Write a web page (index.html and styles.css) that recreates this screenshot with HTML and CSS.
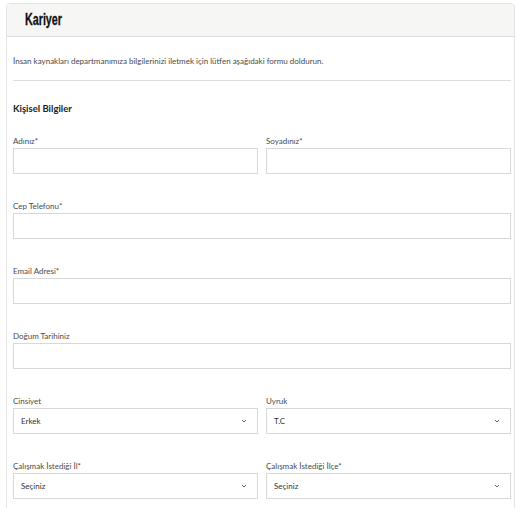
FILE: index.html
```html
<!DOCTYPE html>
<html lang="tr">
<head>
<meta charset="utf-8">
<link rel="stylesheet" href="styles.css">
</head>
<body>
<div class="page">
  <div class="card">
    <div class="card-header"><h1 class="title">Kariyer</h1></div>
    <div class="card-body">
      <p class="intro">İnsan kaynakları departmanımıza bilgilerinizi iletmek için lütfen aşağıdaki formu doldurun.</p>
      <div class="divider"></div>
      <h2 class="section">Kişisel Bilgiler</h2>
      <div class="grid">
        <div class="field"><label class="label">Adınız*</label><div class="input"></div></div>
        <div class="field"><label class="label">Soyadınız*</label><div class="input"></div></div>
        <div class="field full"><label class="label">Cep Telefonu*</label><div class="input"></div></div>
        <div class="field full"><label class="label">Email Adresi*</label><div class="input"></div></div>
        <div class="field full"><label class="label">Doğum Tarihiniz</label><div class="input"></div></div>
        <div class="field"><label class="label">Cinsiyet</label><div class="input select"><span>Erkek</span><svg class="chev" width="6" height="4" viewBox="0 0 6 4"><path d="M1 1 L3 3 L5 1" fill="none" stroke="#666" stroke-width="1"/></svg></div></div>
        <div class="field"><label class="label">Uyruk</label><div class="input select"><span>T.C</span><svg class="chev" width="6" height="4" viewBox="0 0 6 4"><path d="M1 1 L3 3 L5 1" fill="none" stroke="#666" stroke-width="1"/></svg></div></div>
        <div class="field"><label class="label">Çalışmak İstediği İl*</label><div class="input select"><span>Seçiniz</span><svg class="chev" width="6" height="4" viewBox="0 0 6 4"><path d="M1 1 L3 3 L5 1" fill="none" stroke="#666" stroke-width="1"/></svg></div></div>
        <div class="field"><label class="label">Çalışmak İstediği İlçe*</label><div class="input select"><span>Seçiniz</span><svg class="chev" width="6" height="4" viewBox="0 0 6 4"><path d="M1 1 L3 3 L5 1" fill="none" stroke="#666" stroke-width="1"/></svg></div></div>
      </div>
    </div>
  </div>
</div>
</body>
</html>
```
FILE: styles.css
```css
html, body {
  margin: 0;
  padding: 0;
  background: #fff;
}
.page {
  padding: 3px 1px 0 6px;
  font-family: "Lato", "Noto Sans", "Liberation Sans", sans-serif;
  color: #444;
}
.card {
  border: 1px solid #e4e4e4;
  border-bottom: none;
  border-radius: 5px 5px 0 0;
  height: 520px;
}
.card-header {
  height: 32px;
  background: #f6f6f4;
  border-bottom: 1px solid #dcdcdc;
  border-radius: 5px 5px 0 0;
  display: flex;
  align-items: center;
  padding-left: 18px;
}
.title {
  margin: 0;
  font-family: "Liberation Sans", "DejaVu Sans", sans-serif;
  font-weight: bold;
  font-size: 16px;
  color: #111;
  transform: scaleX(0.67);
  transform-origin: left center;
  -webkit-text-stroke: 0.3px #111;
}
.card-body {
  padding: 0 3px 0 6px;
}
.intro {
  margin: 19px 0 0;
  font-size: 8px;
  line-height: 10px;
  color: #4a4a4a;
}
.divider {
  margin-top: 14px;
  height: 1px;
  background: #dedede;
}
.section {
  margin: 22px 0 0;
  font-size: 9.5px;
  line-height: 12px;
  font-weight: bold;
  color: #222;
}
.grid {
  margin-top: 21px;
  display: grid;
  grid-template-columns: 1fr 1fr;
  column-gap: 8px;
  row-gap: 27px;
}
.field {
  display: flex;
  flex-direction: column;
  gap: 2px;
}
.full {
  grid-column: 1 / -1;
}
.label {
  font-size: 8px;
  line-height: 10px;
  color: #4a4a4a;
}
.input {
  height: 24px;
  border: 1px solid #d8d8d8;
  background: #fff;
}
.select {
  display: flex;
  align-items: center;
  justify-content: space-between;
  padding: 0 10px 0 7px;
  font-size: 8px;
  color: #333;
}
.chev {
  display: block;
}
```
